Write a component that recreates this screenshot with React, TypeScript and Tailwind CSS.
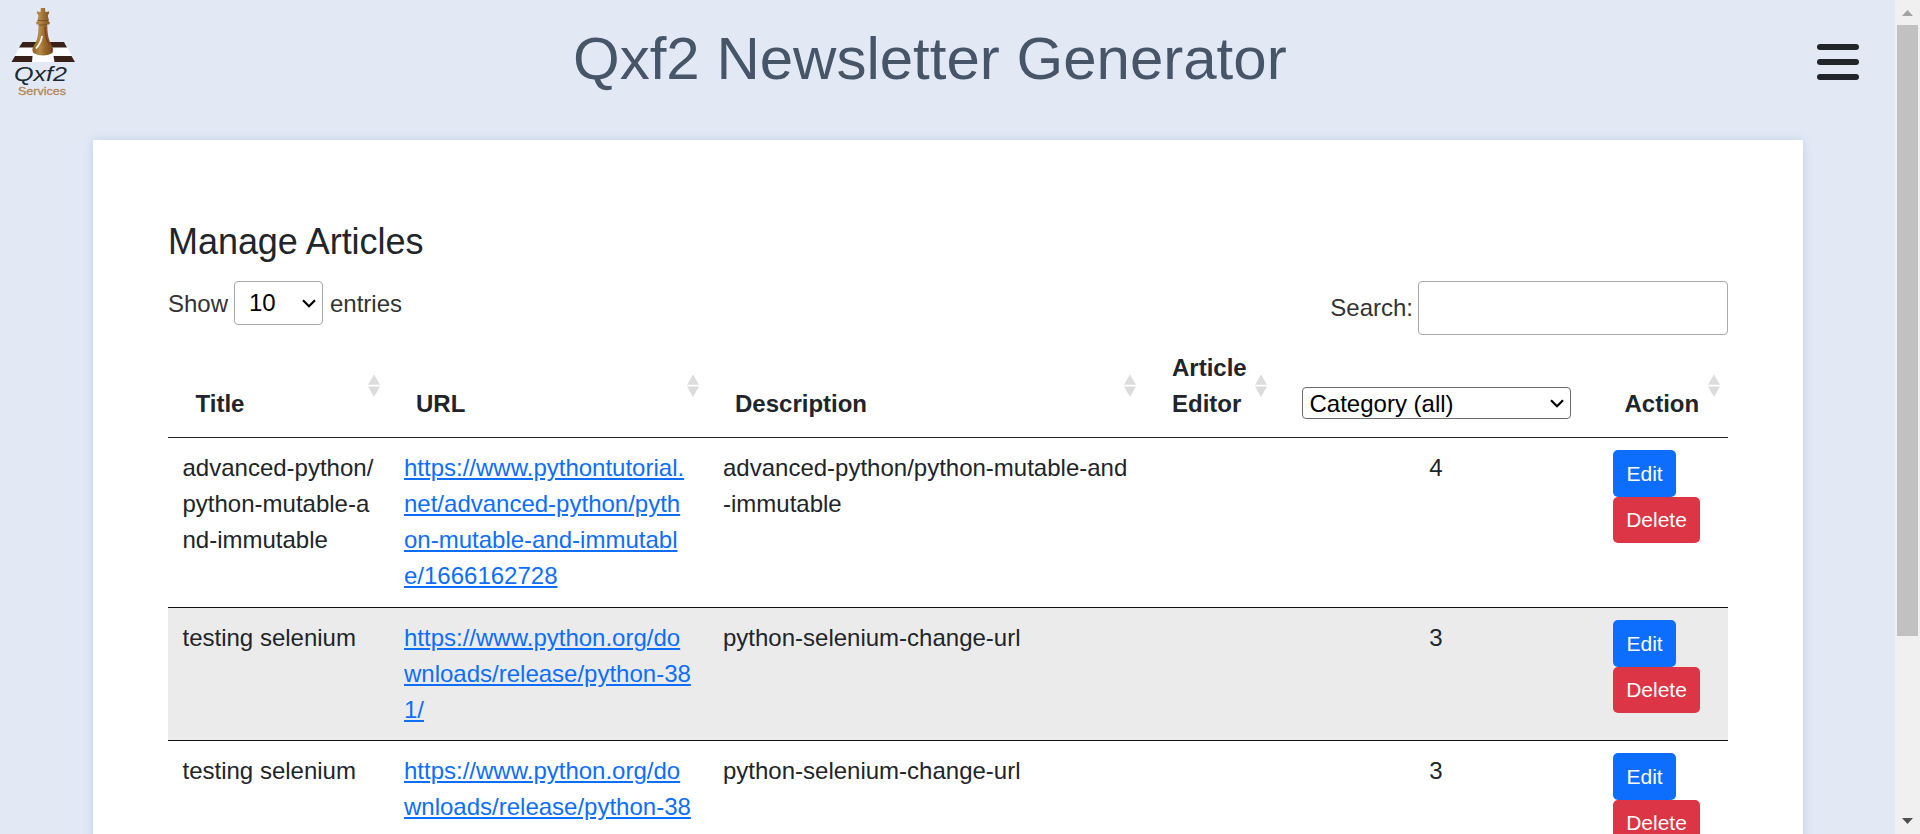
import React from "react";

type Article = { title: string; url: string; description: string; category: number };

const articles: Article[] = [
  {
    title: "advanced-python/python-mutable-and-immutable",
    url: "https://www.pythontutorial.net/advanced-python/python-mutable-and-immutable/1666162728",
    description: "advanced-python/python-mutable-and-immutable",
    category: 4,
  },
  {
    title: "testing selenium",
    url: "https://www.python.org/downloads/release/python-381/",
    description: "python-selenium-change-url",
    category: 3,
  },
  {
    title: "testing selenium",
    url: "https://www.python.org/downloads/release/python-381/",
    description: "python-selenium-change-url",
    category: 3,
  },
];

const columns = "grid grid-cols-[221px_319px_437px_142px_297px_144px]";

function Logo() {
  return (
    <svg viewBox="0 0 76 98" className="h-[98px] w-[76px] shrink-0">
      <defs>
        <linearGradient id="wood" x1="0" x2="1">
          <stop offset="0" stopColor="#8a5f28" />
          <stop offset="0.35" stopColor="#b58a4a" />
          <stop offset="0.6" stopColor="#98692c" />
          <stop offset="1" stopColor="#744a1c" />
        </linearGradient>
      </defs>
      <path d="M22 42H64.500L75 62H12Z" fill="#fdfdff" />
      <path d="M22.500 42H64L67 47.500H19Z" fill="#3a2118" />
      <path d="M15 56H32.500L32 62H11.500Z" fill="#3a2118" />
      <path d="M53.500 56H71.500L75 62H54.500Z" fill="#3a2118" />
      <path
        d="M40.800 8H45L45.300 12L49.500 11.500L47.800 16L49 20.500H47.500L50 22.500L49 24.500H47.300C47.300 33 48.500 39 50.500 43C53 47 53.500 50 52.500 53Q43 58 33.500 53C31.500 50 32.500 47 35.500 43C38 38 38.500 33 38.500 24.500H36.800L36 22.500L38.500 20.500H37.500L38.500 16L36.500 11.500L40.500 12Z"
        fill="url(#wood)"
      />
      <path d="M37.500 20.500H48.500M39 25H47" stroke="#744a1c" strokeWidth="0.800" />
      <path d="M42 36C41.500 42 39 45 36 48.500" fill="none" stroke="#fff6e6" strokeWidth="1.800" />
      <path d="M45 27C45.500 37 47 42 50 45M51.800 48L51.500 52" fill="none" stroke="#8f2417" strokeWidth="1" />
      <text x="14" y="81" fontSize="20" fontStyle="italic" fill="#1b2a33" textLength="53" lengthAdjust="spacingAndGlyphs">Qxf2</text>
      <text x="18" y="94.500" fontSize="11.500" fill="#b58453" stroke="#b58453" strokeWidth="0.300" textLength="48" lengthAdjust="spacingAndGlyphs">Services</text>
    </svg>
  );
}

function SortIcon() {
  return (
    <svg viewBox="0 0 12 24" className="mt-[23.500px] h-6 w-3 shrink-0" fill="#dcdcdc">
      <path d="M6 .5L12 10.800H0Z" />
      <path d="M0 12.500H12L6 23Z" />
    </svg>
  );
}

function Chevron() {
  return (
    <svg viewBox="0 0 14 9" className="h-[9px] w-[14px]" fill="none" stroke="#000" strokeWidth="2.200">
      <path d="M1 1.200L7 7.200L13 1.200" />
    </svg>
  );
}

function HeaderCell({ label, pad }: { label: string; pad: string }) {
  return (
    <div className={"flex justify-between " + pad}>
      <span className="self-end">{label}</span>
      <SortIcon />
    </div>
  );
}

function Row({ article, striped }: { article: Article; striped: boolean }) {
  return (
    <div className={columns + " border-b border-[#111] break-all first:pb-px " + (striped ? "bg-[#ebebeb]" : "bg-white")}>
      <div className="py-3 pr-3 pl-[14.500px]">{article.title}</div>
      <div className="py-3 pr-[15px] pl-[15px]">
        <a href="#" className="text-[#0d6efd] underline">{article.url}</a>
      </div>
      <div className="py-3 pr-3 pl-[15px]">{article.description}</div>
      <div />
      <div className="py-3 pl-px text-center">{article.category}</div>
      <div className="flex flex-col items-start pt-3 pl-[29px] text-[21px] leading-[31.500px] text-white">
        <button className="h-[46.500px] rounded-[5px] bg-[#0d6efd] px-[13.500px]">Edit</button>
        <button className="h-[46.500px] w-[87px] rounded-[5px] bg-[#dc3545]">Delete</button>
      </div>
    </div>
  );
}

export default function App() {
  return (
    <div className="flex h-[834px] w-[1920px] overflow-hidden bg-[#e2e9f5] font-['Liberation_Sans',Arial,sans-serif] text-2xl leading-9 text-[#212529]">
      <div className="flex w-[1895px] flex-col">
        <header className="flex h-[140px] shrink-0 items-start">
          <Logo />
          <h1 className="mt-[23px] ml-[497px] text-[60px] leading-[72px] whitespace-nowrap text-[#475569]">Qxf2 Newsletter Generator</h1>
          <button aria-label="Menu" className="mt-11 mr-9 ml-auto flex w-[42px] flex-col gap-[9px]">
            <span className="h-1.5 w-full rounded-full bg-[#212529]" />
            <span className="h-1.5 w-full rounded-full bg-[#212529]" />
            <span className="h-1.5 w-full rounded-full bg-[#212529]" />
          </button>
        </header>
        <main className="ml-[93px] h-[1100px] w-[1710px] shrink-0 bg-white px-[75px] pt-20 shadow-[0_0_9px_rgba(120,145,200,0.3)]">
          <h2 className="text-[36px] leading-[43px] tracking-[-0.05px]">Manage Articles</h2>
          <div className="mt-[18px] flex h-[66px] items-start justify-between text-[#333]">
            <div className="flex items-start">
              <span className="mt-[5px] w-[66px]">Show</span>
              <div className="flex h-11 w-[89px] items-center justify-between rounded-[4px] border border-[#aaa] pr-[6px] pl-[14px] text-black">
                <span className="leading-[38px]">10</span>
                <Chevron />
              </div>
              <span className="mt-[5px] ml-[7px]">entries</span>
            </div>
            <div className="flex items-start">
              <span className="mt-[9px] mr-[5px]">Search:</span>
              <input aria-label="Search" className="h-[54px] w-[310px] rounded-[4px] border border-[#aaa] px-2" />
            </div>
          </div>
          <div className={columns + " h-[91px] border-b border-[#212529] pt-[3px] pb-[15px] font-bold"}>
            <HeaderCell label="Title" pad="pl-[27.500px] pr-[9px]" />
            <HeaderCell label="URL" pad="pl-[27px] pr-[9px]" />
            <HeaderCell label="Description" pad="pl-[27px] pr-[9px]" />
            <HeaderCell label="Article Editor" pad="pl-[27px] pr-[20px]" />
            <div className="flex items-end pb-[3px] pl-[15px]">
              <div className="flex h-8 w-[269px] items-center justify-between rounded-[4px] border border-[#6b6b6b] pr-[6px] pl-[6.500px] font-normal text-black">
                <span className="pt-[2px]">Category (all)</span>
                <Chevron />
              </div>
            </div>
            <HeaderCell label="Action" pad="pl-[40.500px] pr-[8px]" />
          </div>
          <div>
            {articles.map((article, i) => (
              <Row key={i} article={article} striped={i % 2 === 1} />
            ))}
          </div>
        </main>
      </div>
      <div className="flex w-[25px] flex-col items-center bg-[#f0f0f0]">
        <svg viewBox="0 0 25 25" className="h-[25px] w-[25px] shrink-0"><path d="M7 16L12.500 10L18 16Z" fill="#a3a3a3" /></svg>
        <div className="h-[611px] w-[21px] bg-[#c1c1c1]" />
        <svg viewBox="0 0 25 25" className="mt-auto h-[25px] w-[25px] shrink-0"><path d="M7 9L12.500 15L18 9Z" fill="#505050" /></svg>
      </div>
    </div>
  );
}
